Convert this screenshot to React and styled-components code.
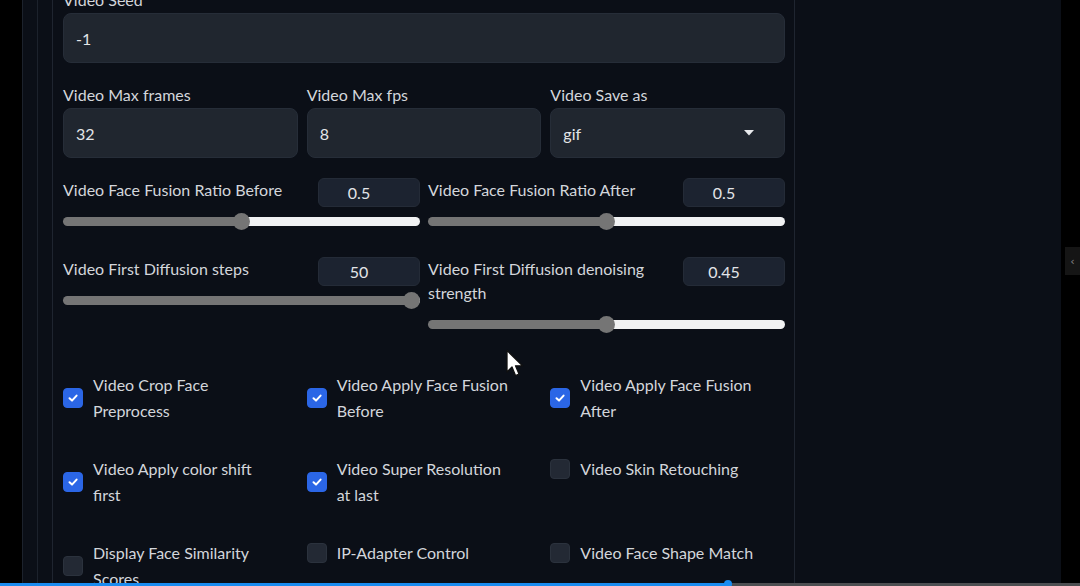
import React from "react";
import styled, { createGlobalStyle } from "styled-components";

const GlobalStyle = createGlobalStyle`
  html, body { margin: 0; padding: 0; background: #000; }
  body { font-family: Lato, "Noto Sans", "Liberation Sans", sans-serif; overflow: hidden; }
  * { box-sizing: border-box; }
`;

const Screen = styled.div`
  position: relative;
  display: flex;
  width: 1080px;
  height: 586px;
  overflow: hidden;
  background: #000;
`;

const Gutter = styled.div`
  width: 22px;
  flex: none;
  background: #000;
`;

const Panel = styled.div`
  flex: 1;
  display: flex;
  background: #0b0f17;
  height: 100%;
`;

const Rail = styled.div`
  display: flex;
  height: 100%;
  border-left: 1px solid #1c222c;
  padding-left: 14px;
`;

const Block = styled.div`
  width: 743px;
  height: 100%;
  border-left: 1px solid #1f2530;
  border-right: 1px solid #1f2530;
  padding: 0 9px 0 10px;
`;

const Content = styled.div`
  display: flex;
  flex-direction: column;
  margin-top: -10px;
  color: #d4d7dc;
`;

const Section = styled.div`
  margin-top: ${(p) => p.$mt || 0}px;
`;

const Label = styled.div`
  font-size: 16px;
  line-height: 20px;
  margin-bottom: 3px;
  color: #d3d6db;
`;

const InputBox = styled.div`
  height: 50px;
  display: flex;
  align-items: center;
  justify-content: space-between;
  padding: 0 30px 0 12px;
  background: #20262f;
  border: 1px solid #262d38;
  border-radius: 8px;
  font-size: 16px;
  color: #e3e5e8;
`;

const Grid3 = styled.div`
  display: grid;
  grid-template-columns: repeat(3, 1fr);
  column-gap: 9px;
  row-gap: ${(p) => p.$rowGap || 0}px;
  align-items: start;
`;

const Grid2 = styled.div`
  display: grid;
  grid-template-columns: 1fr 1fr;
  column-gap: 8px;
  align-items: start;
`;

const SliderHeader = styled.div`
  display: flex;
  align-items: flex-start;
  justify-content: space-between;
  gap: 12px;
`;

const SliderLabel = styled.div`
  font-size: 16px;
  line-height: 24px;
  padding-bottom: 5px;
  color: #d3d6db;
`;

const NumBox = styled.div`
  flex: none;
  width: 102px;
  height: 29px;
  display: flex;
  align-items: center;
  justify-content: center;
  padding-right: 20px;
  background: #1c2330;
  border: 1px solid #242b37;
  border-radius: 6px;
  font-size: 16px;
  color: #e3e5e8;
`;

const TrackWrap = styled.div`
  margin-top: 4px;
  height: 20px;
  display: flex;
  align-items: center;
`;

const Track = styled.div`
  position: relative;
  width: 100%;
  height: 9px;
  border-radius: 5px;
`;

const Thumb = styled.div`
  position: absolute;
  top: 50%;
  width: 17px;
  height: 17px;
  margin: -8.5px 0 0 -8.5px;
  border-radius: 50%;
  background: #757575;
`;

const CheckItem = styled.div`
  display: flex;
  align-items: center;
  gap: 10px;
`;

const Box = styled.div`
  flex: none;
  width: 20px;
  height: 20px;
  border-radius: 4px;
  display: flex;
  align-items: center;
  justify-content: center;
  background: ${(p) => (p.$checked ? "#2b66e6" : "#232934")};
  border: 1px solid ${(p) => (p.$checked ? "#2b66e6" : "#2b323d")};
`;

const CheckText = styled.div`
  font-size: 16px;
  line-height: 26px;
  color: #d3d6db;
`;

const SideStrip = styled.div`
  position: relative;
  width: 19px;
  flex: none;
  background: #000;
`;

const CollapseTab = styled.div`
  position: absolute;
  left: 4px;
  top: 247px;
  width: 15px;
  height: 28px;
  background: #151515;
  color: #8a8a8a;
  font-size: 11px;
  display: flex;
  align-items: center;
  justify-content: center;
  font-family: "DejaVu Sans", sans-serif;
`;

const Cursor = styled.svg`
  position: absolute;
  left: 505px;
  top: 349px;
`;

const Progress = styled.div`
  position: absolute;
  left: 0;
  right: 0;
  bottom: 0;
  height: 3px;
  background: #4d4f52;
`;

const ProgressFill = styled.div`
  height: 100%;
  background: #1a8cf0;
  position: relative;
`;

const ProgressDot = styled.div`
  position: absolute;
  right: -4px;
  top: -3px;
  width: 8px;
  height: 8px;
  border-radius: 50%;
  background: #1a8cf0;
`;

function Slider({ label, value, frac }) {
  const pos = `calc(8.5px + (100% - 17px) * ${frac})`;
  return (
    <div>
      <SliderHeader>
        <SliderLabel>{label}</SliderLabel>
        <NumBox>{value}</NumBox>
      </SliderHeader>
      <TrackWrap>
        <Track
          style={{
            background: `linear-gradient(to right, #757575 ${pos}, #f1f2f3 ${pos})`,
          }}
        >
          <Thumb style={{ left: pos }} />
        </Track>
      </TrackWrap>
    </div>
  );
}

function Check({ checked, lines }) {
  return (
    <CheckItem>
      <Box $checked={checked}>
        {checked && (
          <svg width="12" height="12" viewBox="0 0 12 12">
            <path d="M2.5 6.3 L5 8.6 L9.6 3.6" fill="none" stroke="#fff" strokeWidth="2" strokeLinecap="round" strokeLinejoin="round" />
          </svg>
        )}
      </Box>
      <CheckText>
        {lines.map((l, i) => (
          <React.Fragment key={i}>
            {i > 0 && <br />}
            {l}
          </React.Fragment>
        ))}
      </CheckText>
    </CheckItem>
  );
}

const checks = [
  { checked: true, lines: ["Video Crop Face", "Preprocess"] },
  { checked: true, lines: ["Video Apply Face Fusion", "Before"] },
  { checked: true, lines: ["Video Apply Face Fusion", "After"] },
  { checked: true, lines: ["Video Apply color shift", "first"] },
  { checked: true, lines: ["Video Super Resolution", "at last"] },
  { checked: false, lines: ["Video Skin Retouching"] },
  { checked: false, lines: ["Display Face Similarity", "Scores"] },
  { checked: false, lines: ["IP-Adapter Control"] },
  { checked: false, lines: ["Video Face Shape Match"] },
];

export default function App() {
  return (
    <>
      <GlobalStyle />
      <Screen>
        <Gutter />
        <Panel>
          <Rail>
            <Rail>
              <Block>
                <Content>
                  <Section>
                    <Label>Video Seed</Label>
                    <InputBox>-1</InputBox>
                  </Section>
                  <Section $mt={22}>
                    <Grid3>
                      <div>
                        <Label>Video Max frames</Label>
                        <InputBox>32</InputBox>
                      </div>
                      <div>
                        <Label>Video Max fps</Label>
                        <InputBox>8</InputBox>
                      </div>
                      <div>
                        <Label>Video Save as</Label>
                        <InputBox>
                          gif
                          <svg width="10" height="6" viewBox="0 0 10 6">
                            <polygon points="0,0 10,0 5,5.5" fill="#e8eaed" />
                          </svg>
                        </InputBox>
                      </div>
                    </Grid3>
                  </Section>
                  <Section $mt={20}>
                    <Grid2>
                      <Slider label="Video Face Fusion Ratio Before" value="0.5" frac={0.5} />
                      <Slider label="Video Face Fusion Ratio After" value="0.5" frac={0.5} />
                    </Grid2>
                  </Section>
                  <Section $mt={26}>
                    <Grid2>
                      <Slider label="Video First Diffusion steps" value="50" frac={1} />
                      <Slider
                        label={
                          <>
                            Video First Diffusion denoising
                            <br />
                            strength
                          </>
                        }
                        value="0.45"
                        frac={0.5}
                      />
                    </Grid2>
                  </Section>
                  <Section $mt={38}>
                    <Grid3 $rowGap={32}>
                      {checks.map((c, i) => (
                        <Check key={i} checked={c.checked} lines={c.lines} />
                      ))}
                    </Grid3>
                  </Section>
                </Content>
              </Block>
            </Rail>
          </Rail>
        </Panel>
        <SideStrip>
          <CollapseTab>‹</CollapseTab>
        </SideStrip>
        <Cursor width="20" height="30" viewBox="0 0 20 30">
          <path
            d="M2 1.5 L2 23 L7 18 L10.5 26.5 L14 25 L10.5 16.8 L17.5 16.8 Z"
            fill="#fff"
            stroke="#111"
            strokeWidth="1.3"
            strokeLinejoin="round"
          />
        </Cursor>
        <Progress>
          <ProgressFill style={{ width: "728px" }}>
            <ProgressDot />
          </ProgressFill>
        </Progress>
      </Screen>
    </>
  );
}
